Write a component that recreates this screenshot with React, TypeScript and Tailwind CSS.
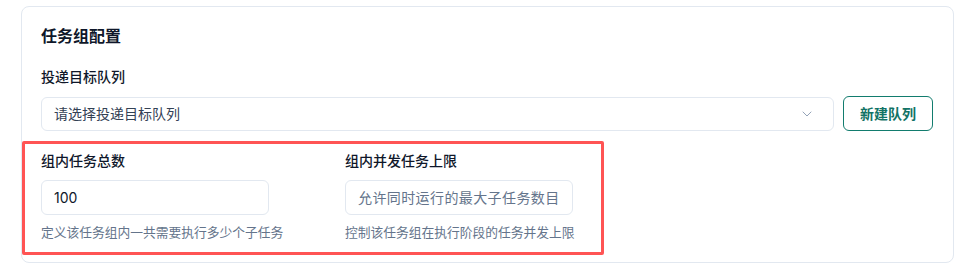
import { ChevronDown } from "lucide-react";

const fields = [
  {
    label: "组内任务总数",
    value: "100",
    placeholder: "",
    help: "定义该任务组内一共需要执行多少个子任务",
  },
  {
    label: "组内并发任务上限",
    value: "",
    placeholder: "允许同时运行的最大子任务数目",
    help: "控制该任务组在执行阶段的任务并发上限",
  },
];

export default function App() {
  return (
    <div
      className="min-h-screen bg-white pl-[21px] pt-[6px]"
      style={{ fontFamily: 'Inter, "Noto Sans CJK SC", sans-serif' }}
    >
      <div className="w-[933px] rounded-lg border border-[#e2e8f0] bg-white pb-[7px] pl-[19px] pr-[20px] pt-[17px]">
        <h2 className="text-[16px] font-semibold leading-6 text-[#0f172a]">任务组配置</h2>

        <p className="mt-[19px] text-[14px] font-medium leading-5 text-[#0f172a]">投递目标队列</p>
        <div className="mt-[9px] flex items-center gap-[9px]">
          <button className="flex h-[34px] flex-1 items-center justify-between rounded-md border border-[#e2e8f0] bg-white pl-[12px] pr-[18px] text-left text-[14px] text-[#334155]">
            <span>请选择投递目标队列</span>
            <ChevronDown className="h-4 w-4 text-[#94a3b8]" strokeWidth={1.5} />
          </button>
          <button className="h-[35px] w-[90px] rounded-md border border-[#127c6e] bg-white text-[14px] font-semibold text-[#127366]">
            新建队列
          </button>
        </div>

        <div className="-ml-[19px] mt-[10px] w-[582px] rounded-[2px] border-[3px] border-[#ff5454] pb-[9px] pl-[16px] pt-[7px]">
          <div className="grid grid-cols-[304px_1fr]">
            {fields.map((f) => (
              <div key={f.label} className="flex flex-col">
                <span className="text-[14px] font-medium leading-5 text-[#0f172a]">{f.label}</span>
                <input
                  readOnly
                  value={f.value}
                  placeholder={f.placeholder}
                  className={
                    "mt-[9px] h-[35px] w-[228px] rounded-md border border-[#e2e8f0] bg-white px-[12px] text-[14px] text-[#0f172a] outline-none placeholder:text-[#64748b] " +
                    (f.value ? "" : "tracking-[0.4px]")
                  }
                />
                <span className="mt-[8px] text-[12.75px] leading-5 text-[#64748b]">{f.help}</span>
              </div>
            ))}
          </div>
        </div>
      </div>
    </div>
  );
}
